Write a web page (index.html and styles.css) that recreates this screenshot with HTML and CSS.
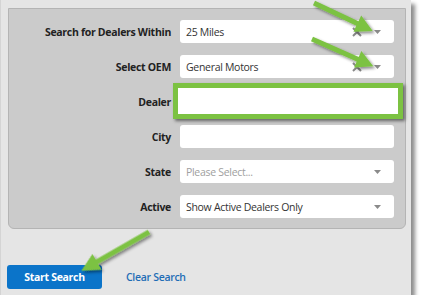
FILE: index.html
```html
<!DOCTYPE html>
<html lang="en">
<head>
    <meta charset="UTF-8">
    <title>Dealer Search</title>
    <link rel="stylesheet" href="styles.css">
</head>
<body>
    <div class="frame">
        <div class="panel">
            <div class="row">
                <label>Search for Dealers Within</label>
                <div class="field select">
                    <span class="value">25 Miles</span>
                    <svg class="clear" width="10" height="10" viewBox="0 0 10 10"><path d="M1 1L9 9M9 1L1 9"/></svg>
                    <svg class="caret" width="7" height="4" viewBox="0 0 7 4"><path d="M0 0H7L3.5 4Z"/></svg>
                </div>
            </div>
            <div class="row">
                <label>Select OEM</label>
                <div class="field select">
                    <span class="value">General Motors</span>
                    <svg class="clear" width="10" height="10" viewBox="0 0 10 10"><path d="M1 1L9 9M9 1L1 9"/></svg>
                    <svg class="caret" width="7" height="4" viewBox="0 0 7 4"><path d="M0 0H7L3.5 4Z"/></svg>
                </div>
            </div>
            <div class="row">
                <label>Dealer</label>
                <div class="field"></div>
            </div>
            <div class="row">
                <label>City</label>
                <div class="field"></div>
            </div>
            <div class="row">
                <label>State</label>
                <div class="field select">
                    <span class="value placeholder">Please Select...</span>
                    <svg class="caret" width="7" height="4" viewBox="0 0 7 4"><path d="M0 0H7L3.5 4Z"/></svg>
                </div>
            </div>
            <div class="row">
                <label>Active</label>
                <div class="field select">
                    <span class="value">Show Active Dealers Only</span>
                    <svg class="caret" width="7" height="4" viewBox="0 0 7 4"><path d="M0 0H7L3.5 4Z"/></svg>
                </div>
            </div>
        </div>

        <div class="actions">
            <button type="button" class="btn-primary">Start Search</button>
            <a href="#" class="link">Clear Search</a>
        </div>

        <!-- annotation overlay -->
        <div class="callout-box"></div>
        <svg class="arrows" width="426" height="307" viewBox="0 0 426 307">
            <defs>
                <filter id="shade" x="-20%" y="-20%" width="140%" height="140%">
                    <feDropShadow dx="2" dy="2" stdDeviation="1.5" flood-color="#000" flood-opacity="0.45"/>
                </filter>
            </defs>
            <g filter="url(#shade)" fill="#7cc242">
                <path transform="translate(313,3) rotate(25.4)" d="M0 -2.5H48V-9L65 0L48 9V2.5H0Z"/>
                <path transform="translate(311,39) rotate(23.9)" d="M0 -2.5H50V-9L67 0L50 9V2.5H0Z"/>
                <path transform="translate(148,232) rotate(150.2)" d="M0 -2.5H60V-9L78 0L60 9V2.5H0Z"/>
            </g>
        </svg>
    </div>
</body>
</html>
```

FILE: styles.css
```css
* {
    box-sizing: border-box;
    margin: 0;
    padding: 0;
}

body {
    font-family: 'Open Sans', sans-serif;
    font-size: 10.5px;
    letter-spacing: -0.3px;
    color: #222;
    background: #fff;
}

.frame {
    position: relative;
    width: 411px;
    height: 295px;
    padding: 8px 6px 0 7px;
    background-color: #e5e5e5;
    border-left: 1px solid #d4d4d4;
    box-shadow: 4px 4px 4px rgba(0,0,0,0.45);
}

.panel {
    width: 398px;
    height: 221px;
    padding: 11px 11px 0 0;
    background-color: #cbcbcb;
    border: 1px solid #b4b4b4;
    border-radius: 0 0 6px 6px;
    display: flex;
    flex-direction: column;
    gap: 12px;
}

.row {
    display: grid;
    grid-template-columns: 162px 214px;
    column-gap: 9px;
    align-items: center;
    height: 23px;
}

.row label {
    text-align: right;
    font-weight: 700;
    color: #222;
}

.field {
    height: 23px;
    background: #fff;
    border-radius: 3px;
    display: flex;
    align-items: center;
    padding: 0 13px 0 6px;
}

.value {
    flex: 1;
    color: #333;
}

.placeholder {
    color: #a0a0a0;
}

.clear {
    margin-right: 12px;
}

.clear path {
    stroke: #8a8a8a;
    stroke-width: 2;
}

.caret path {
    fill: #8a8a8a;
}

.actions {
    display: flex;
    align-items: center;
    gap: 24px;
    margin-top: 36px;
    margin-left: -1px;
}

.btn-primary {
    width: 95px;
    height: 24px;
    background-color: #0b74c9;
    color: #fff;
    border: none;
    border-radius: 3px;
    font-family: inherit;
    font-size: 10.5px;
    letter-spacing: -0.3px;
    font-weight: 700;
}

.link {
    color: #1f6db6;
    font-weight: 600;
    text-decoration: none;
}

.callout-box {
    position: absolute;
    left: 172px;
    top: 83px;
    width: 230px;
    height: 36px;
    background: #fff;
    border: 5px solid #7cc242;
    box-shadow: 2px 2px 3px rgba(0,0,0,0.5);
}

.arrows {
    position: absolute;
    left: 0;
    top: 0;
    pointer-events: none;
}
```
